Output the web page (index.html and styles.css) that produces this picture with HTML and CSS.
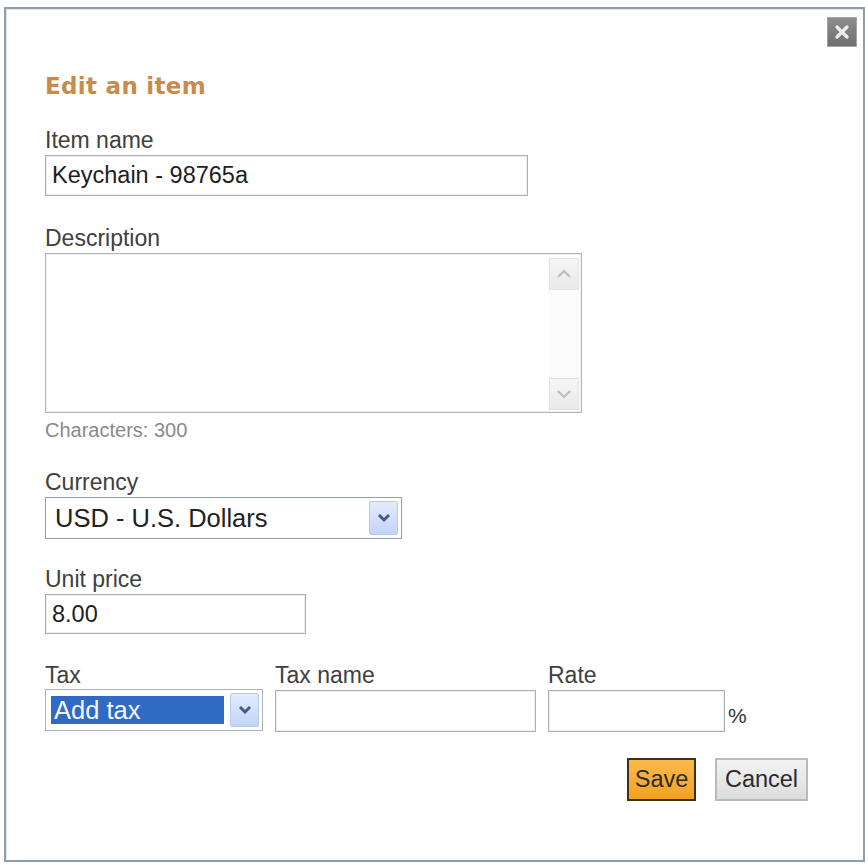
FILE: index.html
```html
<!DOCTYPE html>
<html lang="en">
<head>
  <meta charset="UTF-8" />
  <meta name="viewport" content="width=device-width, initial-scale=1.0"/>
  <title>Edit an item</title>
  <link rel="stylesheet" href="styles.css">
</head>
<body>

<div class="dialog">
  <div class="dialog-top">
    <button type="button" class="close-btn" title="Close">
      <svg width="18" height="18" viewBox="0 0 18 18"><path d="M4 4 L14 14 M14 4 L4 14" stroke="#ececec" stroke-width="3.4" stroke-linecap="round"/></svg>
    </button>
  </div>

  <h2 class="dialog-title">Edit an item</h2>

  <form class="item-form">
    <!-- Name -->
    <div class="form-group group-name">
      <label for="itemName">Item name</label>
      <input type="text" id="itemName" class="field field-name" value="Keychain - 98765a" />
    </div>

    <!-- Description -->
    <div class="form-group group-desc">
      <label for="itemDesc">Description</label>
      <div class="textarea-box">
        <textarea id="itemDesc"></textarea>
        <div class="scrollbar">
          <span class="scroll-btn">
            <svg width="16" height="10" viewBox="0 0 16 10"><path d="M2 8 L8 2 L14 8" fill="none" stroke="#bdbdbd" stroke-width="2.2"/></svg>
          </span>
          <span class="scroll-btn">
            <svg width="16" height="10" viewBox="0 0 16 10"><path d="M2 2 L8 8 L14 2" fill="none" stroke="#bdbdbd" stroke-width="2.2"/></svg>
          </span>
        </div>
      </div>
      <div class="char-count">Characters: 300</div>
    </div>

    <!-- Currency -->
    <div class="form-group group-currency">
      <label>Currency</label>
      <div class="select select-currency">
        <span class="select-value">USD - U.S. Dollars</span>
        <span class="select-arrow">
          <svg width="14" height="10" viewBox="0 0 14 10"><path d="M2 2 L7 7 L12 2" fill="none" stroke="#44598a" stroke-width="3"/></svg>
        </span>
      </div>
    </div>

    <!-- Price -->
    <div class="form-group group-price">
      <label for="unitPrice">Unit price</label>
      <input type="text" id="unitPrice" class="field field-price" value="8.00" />
    </div>

    <!-- Tax -->
    <div class="tax-row">
      <div class="form-group">
        <label>Tax</label>
        <div class="select select-tax">
          <span class="select-value selected">Add tax</span>
          <span class="select-arrow">
            <svg width="14" height="10" viewBox="0 0 14 10"><path d="M2 2 L7 7 L12 2" fill="none" stroke="#44598a" stroke-width="3"/></svg>
          </span>
        </div>
      </div>
      <div class="form-group">
        <label for="taxName">Tax name</label>
        <input type="text" id="taxName" class="field field-taxname" />
      </div>
      <div class="form-group">
        <label for="taxRate">Rate</label>
        <div class="rate-wrap">
          <input type="text" id="taxRate" class="field field-rate" />
          <span class="percent">%</span>
        </div>
      </div>
    </div>

    <div class="actions">
      <button type="submit" class="btn btn-save">Save</button>
      <button type="button" class="btn btn-cancel">Cancel</button>
    </div>
  </form>
</div>

</body>
</html>
```

FILE: styles.css
```css
* {
  box-sizing: border-box;
}

body {
  margin: 0;
  font-family: "Liberation Sans", Arial, sans-serif;
  background: #ffffff;
}

.dialog {
  margin: 7px 0 0 4px;
  width: 861px;
  height: 855px;
  border: 2px solid #8e9cab;
  box-shadow: inset 1px 1px 0 #dfe6ed;
  padding: 8px 6px 0 39px;
}

.dialog-top {
  display: flex;
  justify-content: flex-end;
}

.close-btn {
  width: 30px;
  height: 30px;
  padding: 0;
  border: 1px solid #a3a3a3;
  background: linear-gradient(#8d8d8d, #6f6f6f);
  display: flex;
  align-items: center;
  justify-content: center;
  cursor: pointer;
}

.dialog-title {
  margin: 25px 0 0;
  font: bold 23px/28px "DejaVu Sans", sans-serif;
  letter-spacing: 0.3px;
  color: #c98a4b;
}

.form-group label {
  display: block;
  font-size: 23px;
  line-height: 26px;
  color: #404040;
  margin-bottom: 2px;
}

.group-name {
  margin-top: 27px;
}

.group-desc {
  margin-top: 29px;
}

.group-currency {
  margin-top: 27px;
}

.group-price {
  margin-top: 27px;
}

.field {
  display: block;
  height: 41px;
  padding: 0 6px;
  border: 1px solid #aab0b6;
  box-shadow: inset 0 0 0 1px #eceef0;
  font-family: "Liberation Sans", Arial, sans-serif;
  font-size: 23.5px;
  color: #1e1e1e;
  outline: none;
}

.field-name {
  width: 483px;
}

.field-price {
  width: 261px;
  height: 40px;
}

.field-taxname {
  width: 261px;
  height: 42px;
}

.field-rate {
  width: 177px;
  height: 42px;
}

/* description box */
.textarea-box {
  display: flex;
  width: 537px;
  height: 160px;
  border: 1px solid #a9b7c6;
  box-shadow: inset 0 0 0 1px #eef1f4;
}

.textarea-box textarea {
  flex: 1;
  border: none;
  resize: none;
  outline: none;
  background: transparent;
  font-family: "Liberation Sans", Arial, sans-serif;
  font-size: 23px;
}

.scrollbar {
  width: 30px;
  margin: 4px 2px 2px 0;
  display: flex;
  flex-direction: column;
  justify-content: space-between;
  background: #fbfbfb;
}

.scroll-btn {
  height: 32px;
  display: flex;
  align-items: center;
  justify-content: center;
  background: linear-gradient(#f6f6f6, #e9e9e9);
  border: 1px solid #e2e2e2;
}

.char-count {
  margin-top: 5px;
  font-size: 20px;
  line-height: 24px;
  color: #8a8a8a;
}

/* dropdowns */
.select {
  display: flex;
  align-items: stretch;
  height: 42px;
  padding: 3px 3px 3px 2px;
  border: 1px solid #8fa3b8;
  font-size: 25.5px;
  color: #222;
  background: #fff;
}

.select-currency {
  width: 357px;
}

.select-tax {
  width: 218px;
  margin-top: -1px;
  border-color: #a9b3bd;
}

.select-value {
  flex: 1;
  display: flex;
  align-items: center;
  padding-left: 7px;
}

.select-value.selected {
  margin: 3px 6px 3px 3px;
  padding-left: 3px;
  background: #316ac5;
  color: #f4f7ff;
}

.select-arrow {
  width: 29px;
  display: flex;
  align-items: center;
  justify-content: center;
  border: 1px solid #b8cbef;
  border-radius: 2px;
  background: linear-gradient(#e4ecfd, #c3d4f7);
}

/* tax row */
.tax-row {
  display: flex;
  gap: 12px;
  margin-top: 28px;
}

.rate-wrap {
  display: flex;
  align-items: flex-end;
}

.percent {
  margin-left: 3px;
  margin-bottom: 4px;
  font-size: 21px;
  color: #333;
}

/* buttons */
.actions {
  display: flex;
  justify-content: flex-end;
  gap: 19px;
  margin-top: 26px;
  padding-right: 49px;
}

.btn {
  height: 43px;
  padding: 0;
  font-family: "Liberation Sans", Arial, sans-serif;
  font-size: 23.5px;
  color: #2b2b2b;
  cursor: pointer;
}

.btn-save {
  width: 69px;
  border: 2px solid #3e2f19;
  background: linear-gradient(#fbb94c, #f5a11f);
}

.btn-cancel {
  width: 93px;
  border: 2px solid #bababa;
  background: linear-gradient(#f2f2f2, #dddddd);
}
```
